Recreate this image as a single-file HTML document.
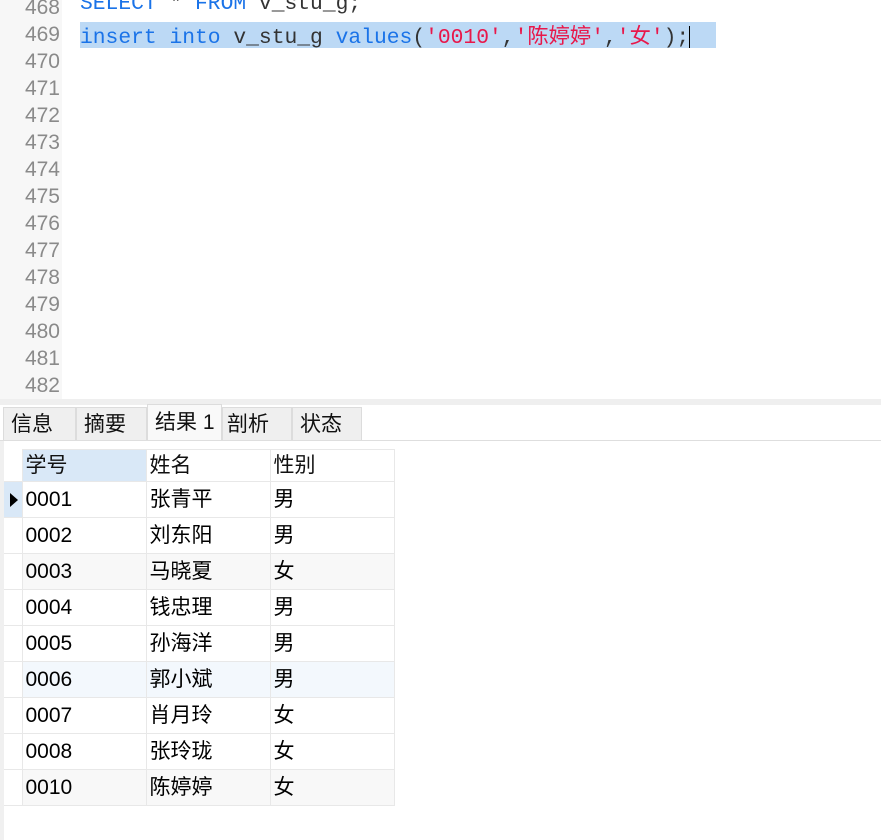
<!DOCTYPE html>
<html><head><meta charset="utf-8"><style>
*{margin:0;padding:0;box-sizing:border-box}
body{width:881px;height:840px;background:#fff;position:relative;overflow:hidden;font-family:"Liberation Sans","Noto Sans CJK SC",sans-serif}
.gut{position:absolute;left:0;top:0;width:62px;height:399px;background:#f7f7f7}
.ln{position:absolute;left:0;width:60px;text-align:right;font:21px "Liberation Sans",sans-serif;color:#8a8a8a;height:27px;line-height:27px}
.code{position:absolute;left:80px;height:27px;line-height:27px;font:21.3px "Liberation Mono","Noto Sans CJK SC",monospace;color:#333;white-space:pre}
.kw{color:#1a73e8}.str{color:#e8174a}
.sel{position:absolute;left:80px;top:22px;width:636px;height:26px;background:#bcd9f5}
.band{position:absolute;left:0;top:399px;width:881px;height:6px;background:#efefef}
.tab{position:absolute;top:407px;height:33px;background:#efefef;border:1px solid #dcdcdc;border-bottom:none;font-size:21px;line-height:33px;padding-left:7px;color:#111}
.tabline{position:absolute;left:0;top:440px;width:881px;height:1px;background:#dedede}
.lstrip{position:absolute;left:0;top:441px;width:4px;height:399px;background:#f0f0f0}
table{position:absolute;left:4px;top:449px;border-collapse:collapse;font-size:21px;color:#000}
td{height:36px;border:1px solid #e8e8e8;padding:0 0 0 3px;vertical-align:middle;line-height:28px}
tr.h td{height:32px;line-height:28px;color:#111}
td.i{width:18px;padding:0;background:#fff;border-left:none}
td.c{width:124px}
</style></head><body>
<div class="gut"></div>
<div class="sel"></div>
<div class="ln" style="top:-6px">468</div>
<div class="ln" style="top:21px">469</div>
<div class="ln" style="top:48px">470</div>
<div class="ln" style="top:75px">471</div>
<div class="ln" style="top:102px">472</div>
<div class="ln" style="top:129px">473</div>
<div class="ln" style="top:156px">474</div>
<div class="ln" style="top:183px">475</div>
<div class="ln" style="top:210px">476</div>
<div class="ln" style="top:237px">477</div>
<div class="ln" style="top:264px">478</div>
<div class="ln" style="top:291px">479</div>
<div class="ln" style="top:318px">480</div>
<div class="ln" style="top:345px">481</div>
<div class="ln" style="top:372px">482</div>
<div class="code" style="top:-8px"><span class="kw">SELECT</span> * <span class="kw">FROM</span> v_stu_g;</div>
<div class="code" style="top:19px"><span class="kw">insert into</span> v_stu_g <span class="kw">values</span>(<span class="str">'0010'</span>,<span class="str">'陈婷婷'</span>,<span class="str">'女'</span>);<span style="display:inline-block;width:1px;height:22px;background:#000;vertical-align:middle"></span></div>
<div class="band"></div>
<div class="tab" style="left:3px;width:73px">信息</div>
<div class="tab" style="left:76px;width:71px">摘要</div>
<div class="tab" style="left:147px;width:75px;top:404px;height:36px;background:#f9f9f9;line-height:36px">结果 1</div>
<div class="tab" style="left:222px;width:70px;padding-left:4px">剖析</div>
<div class="tab" style="left:292px;width:70px">状态</div>
<div class="tabline"></div>
<div class="lstrip"></div>
<table>
<tr class="h"><td class="i" style="border-top:none"></td><td class="c" style="background:#d9e8f7">学号</td><td class="c">姓名</td><td class="c">性别</td></tr>
<tr><td class="i" style="background:#d9e8f7"><span style="display:inline-block;margin-left:6px;border-left:8px solid #000;border-top:7px solid transparent;border-bottom:7px solid transparent;vertical-align:middle"></span></td><td>0001</td><td>张青平</td><td>男</td></tr>
<tr><td class="i"></td><td>0002</td><td>刘东阳</td><td>男</td></tr>
<tr style="background:#f8f8f8"><td class="i"></td><td>0003</td><td>马晓夏</td><td>女</td></tr>
<tr><td class="i"></td><td>0004</td><td>钱忠理</td><td>男</td></tr>
<tr><td class="i"></td><td>0005</td><td>孙海洋</td><td>男</td></tr>
<tr style="background:#f3f8fd"><td class="i"></td><td>0006</td><td>郭小斌</td><td>男</td></tr>
<tr><td class="i"></td><td>0007</td><td>肖月玲</td><td>女</td></tr>
<tr><td class="i"></td><td>0008</td><td>张玲珑</td><td>女</td></tr>
<tr style="background:#f8f8f8"><td class="i"></td><td>0010</td><td>陈婷婷</td><td>女</td></tr>
</table>
</body></html>
